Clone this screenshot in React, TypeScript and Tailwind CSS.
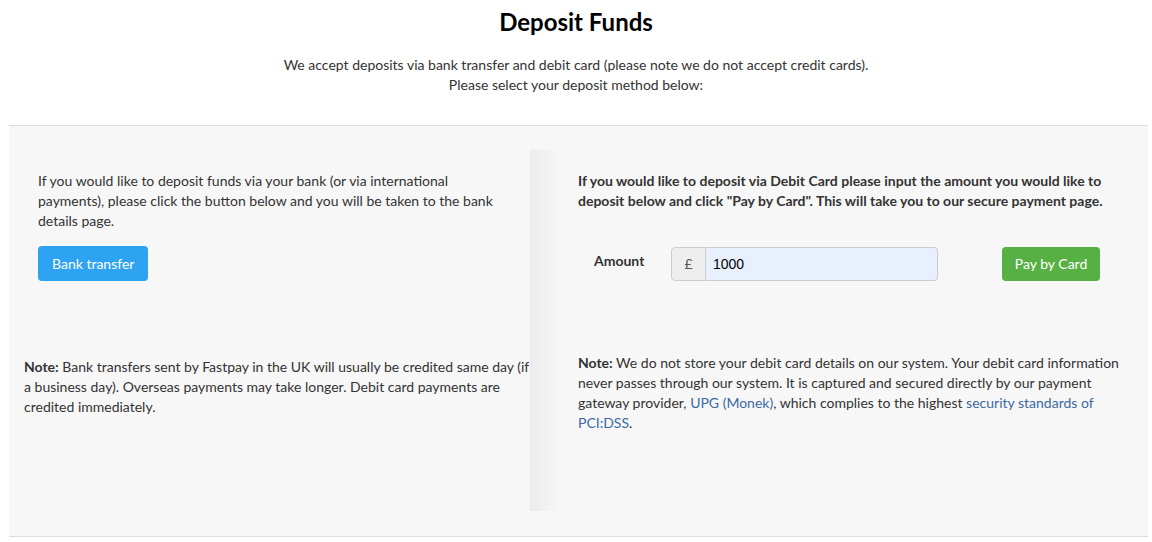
import { useState } from "react";

export default function App() {
  const [amount, setAmount] = useState("1000");

  return (
    <div className="min-h-[542px] bg-white font-['Lato','Open_Sans',sans-serif] text-[14px] leading-5 text-[#333]">
      {/* HEADER */}
      <div className="pt-[7px] text-center">
        <h1 className="text-[24px] leading-[30px] font-bold text-black">Deposit Funds</h1>
        <p className="mt-[18px]">
          We accept deposits via bank transfer and debit card (please note we do not accept credit cards).
          <br />
          Please select your deposit method below:
        </p>
      </div>

      {/* PANEL */}
      <div className="mx-[9px] mt-[30px] flex h-[412px] w-[1139px] border-y border-[#dcdcdc] bg-[#f7f7f7]">
        {/* BANK */}
        <div className="w-[521px] pl-[15px] pt-[45px]">
          <div className="pl-[14px] pr-[20px]">
            <p>
              If you would like to deposit funds via your bank (or via international payments), please click the
              button below and you will be taken to the bank details page.
            </p>
            <button className="mt-[15px] h-[35px] rounded-[4px] bg-[#2ea3f2] px-[14px] text-white">
              Bank transfer
            </button>
          </div>
          <p className="mt-[76px] w-[512px]">
            <b>Note:</b> Bank transfers sent by Fastpay in the UK will usually be credited same day (if a business
            day). Overseas payments may take longer. Debit card payments are credited immediately.
          </p>
        </div>

        {/* CARD */}
        <div className="relative flex-1 pl-[48px] pr-[10px] pt-[45px]">
          <div className="absolute bottom-[25px] left-0 top-[24px] w-[30px] bg-gradient-to-r from-[#ececec] via-[#f1f1f1] to-transparent" />
          <p className="relative w-[530px] font-bold">
            If you would like to deposit via Debit Card please input the amount you would like to deposit below and
            click "Pay by Card". This will take you to our secure payment page.
          </p>
          <div className="relative mt-[35px] flex h-[35px] items-center">
            <span className="ml-[16px] mb-[6px] w-[77px] font-bold text-[#333]">Amount</span>
            <span className="flex h-[34px] w-[35px] items-center justify-center rounded-l-[4px] border border-[#ccc] bg-[#eee] text-[#555]">
              £
            </span>
            <input
              value={amount}
              onChange={(e) => setAmount(e.target.value)}
              className="h-[34px] w-[232px] rounded-r-[4px] border border-l-0 border-[#ccc] bg-[#e8f0fe] px-[7px] font-['Liberation_Sans',sans-serif] text-[14px] text-black outline-none"
            />
            <button className="ml-[64px] h-[34px] w-[98px] rounded-[4px] bg-[#57b043] text-white">Pay by Card</button>
          </div>
          <p className="relative mt-[72px] w-[556px]">
            <b>Note:</b> We do not store your debit card details on our system. Your debit card information never
            passes through our system. It is captured and secured directly by our payment gateway provider,{" "}
            <a className="text-[#3a6aa0]">UPG (Monek)</a>, which complies to the highest{" "}
            <a className="text-[#3a6aa0]">security standards of PCI:DSS</a>.
          </p>
        </div>
      </div>
    </div>
  );
}
